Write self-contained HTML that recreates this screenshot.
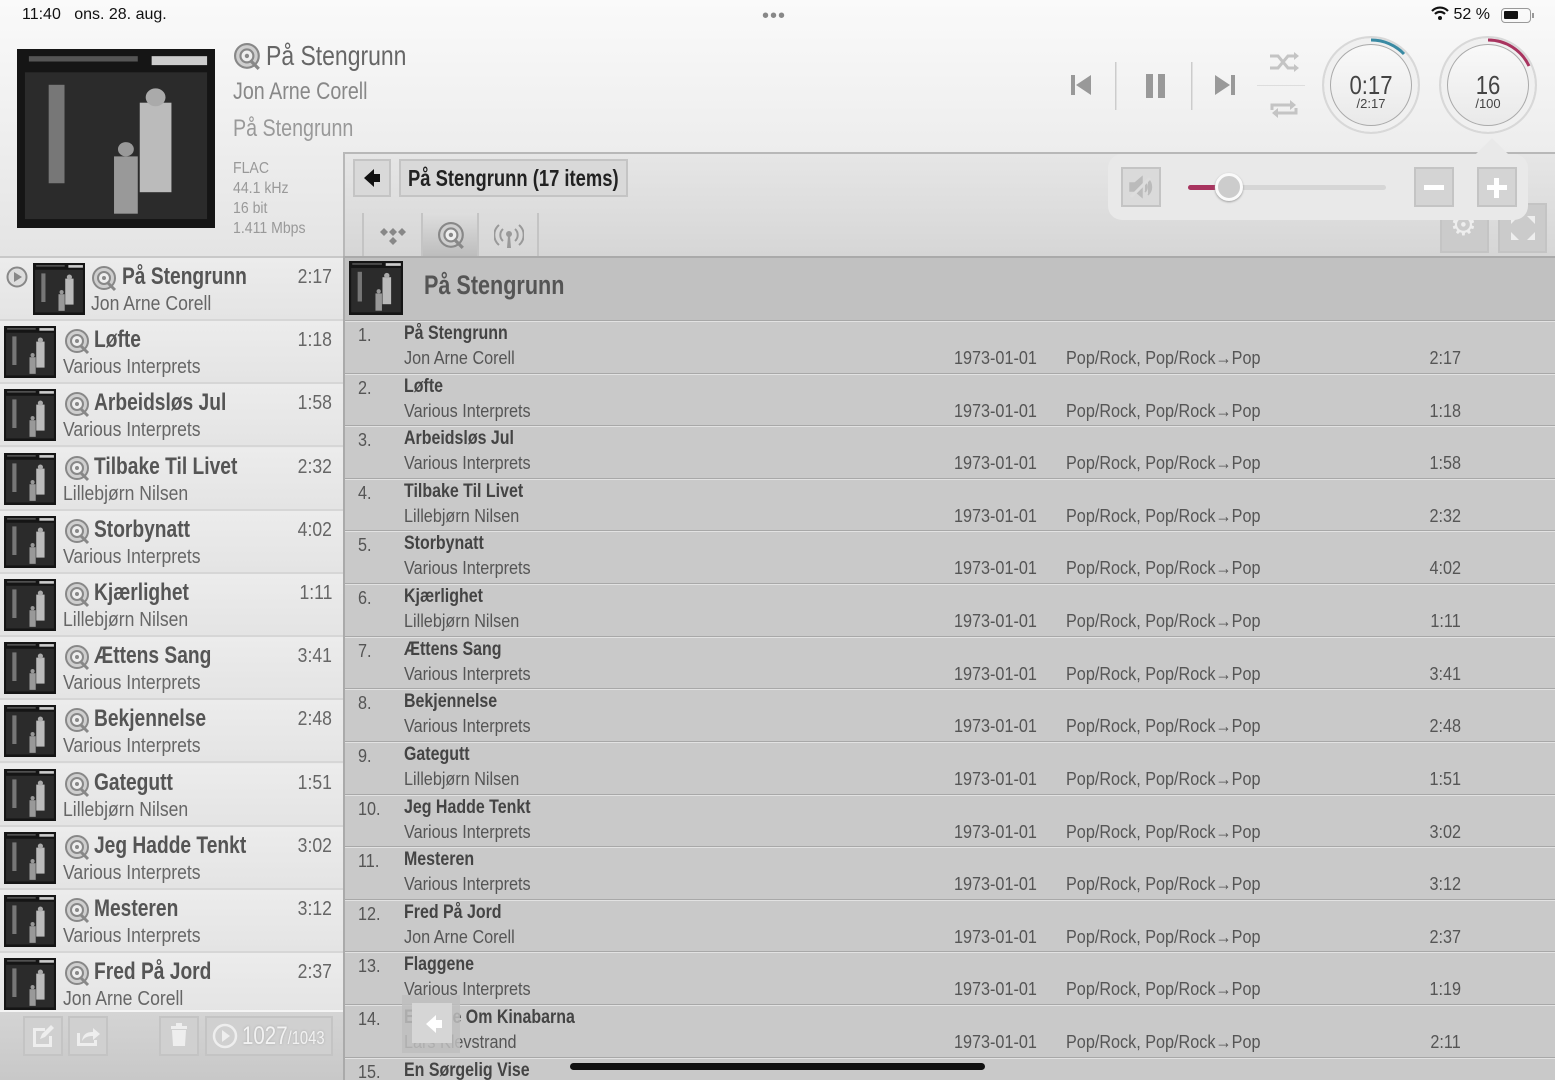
<!DOCTYPE html>
<html><head><meta charset="utf-8">
<style>
*{margin:0;padding:0;box-sizing:border-box}
body{width:1555px;height:1080px;overflow:hidden;position:relative;font-family:"Liberation Sans Narrow","Liberation Sans",sans-serif;color:#555;background:#e6e6e6}
.a{position:absolute}
.sx{transform-origin:0 0;white-space:nowrap}
.hdr{left:0;top:0;width:1555px;height:256px;background:linear-gradient(#fafafa,#e4e4e4)}
.sb{font-family:"Liberation Sans",sans-serif;font-size:16px;color:#111}
.left{left:0;top:256px;width:343px;height:754px;background:#e9e9e9;border-top:2px solid #c8c8c8;overflow:hidden}
.li{position:absolute;left:0;width:343px;height:63px;border-bottom:2px solid #d6d6d6;background:linear-gradient(#ececec,#e4e4e4)}
.li .th{position:absolute;top:5px;width:52px;height:52px}
.li .t{position:absolute;top:5px;font-size:24px;font-weight:bold;color:#555;white-space:nowrap;transform:scaleX(.8);transform-origin:0 0}
.li .s{position:absolute;top:35px;font-size:20px;color:#666;white-space:nowrap;transform:scaleX(.88);transform-origin:0 0}
.li .d{position:absolute;right:11px;top:8px;font-size:20px;color:#666;transform:scaleX(.88);transform-origin:100% 0}
.li .ic{position:absolute;top:8px;width:26px;height:26px}
.right{left:343px;top:256px;width:1212px;height:824px;background:#c9c9c9;border-top:2px solid #aaa;border-left:2px solid #aaa;overflow:hidden}
.tr{position:absolute;left:0;width:1212px;height:53px;border-top:1px solid #a8a8a8;box-shadow:inset 0 1px 0 #e2e2e2;background:#c9c9c9}
.tr span{position:absolute;white-space:nowrap;transform-origin:0 0;transform:scaleX(.9)}
.n{left:13px;top:4px;font-size:18px;color:#555}
.tr .tt{left:59px;top:2px;font-size:19px;font-weight:bold;color:#444;transform:scaleX(.84)}
.ar{left:59px;top:27px;font-size:18px;color:#555}
.dt{left:609px;top:27px;font-size:18px;color:#555}
.gn{left:721px;top:27px;font-size:18px;color:#555}
.tr .du{right:96px;top:27px;font-size:18px;color:#555;transform-origin:100% 0}
.btn{position:absolute;background:#d9d9d9;border:2px solid #c4c4c4}
</style></head><body>
<svg width="0" height="0" style="position:absolute">
<defs>
<symbol id="art" viewBox="0 0 100 100">
<rect width="100" height="100" fill="#151515"/>
<rect x="4" y="13" width="92" height="82" fill="#2b2b2b"/>
<rect x="16" y="20" width="8" height="55" fill="#777"/>
<rect x="62" y="30" width="16" height="50" fill="#bbb"/>
<circle cx="70" cy="27" r="5" fill="#aaa"/>
<rect x="49" y="60" width="12" height="32" fill="#999"/>
<circle cx="55" cy="56" r="4" fill="#999"/>
<rect x="68" y="4" width="28" height="5" fill="#ccc"/>
<rect x="6" y="4" width="55" height="3" fill="#555"/>
</symbol>
<symbol id="disc" viewBox="0 0 26 26">
<circle cx="12" cy="12" r="11" fill="#cfcfcf" stroke="#888" stroke-width="2"/>
<circle cx="12" cy="12" r="6" fill="#eee" stroke="#888" stroke-width="2"/>
<circle cx="12" cy="12" r="2" fill="#888"/>
<path d="M15 16 L23 24" stroke="#888" stroke-width="3"/>
</symbol>
</defs></svg>

<div class="a hdr"></div>
<div class="a sb" style="left:22px;top:6px">11:40&nbsp;&nbsp;&nbsp;ons. 28. aug.</div>
<div class="a" style="left:762px;top:5px;font-size:20px;color:#888;letter-spacing:1px;font-family:'Liberation Sans',sans-serif">•••</div>
<div class="a sb" style="left:1431px;top:6px">
<svg width="18" height="14" viewBox="0 0 18 14" style="vertical-align:-1px"><path d="M1 5 A11 11 0 0 1 17 5" stroke="#111" stroke-width="2.2" fill="none"/><path d="M4 8 A7 7 0 0 1 14 8" stroke="#111" stroke-width="2.2" fill="none"/><circle cx="9" cy="12" r="2" fill="#111"/></svg> 52 %</div>
<div class="a" style="left:1501px;top:8px;width:30px;height:15px;border:1.5px solid #999;border-radius:4px"><div style="margin:2px;width:14px;height:8px;background:#111;border-radius:1px"></div></div>
<div class="a" style="left:1532px;top:13px;width:2px;height:5px;background:#999"></div>

<svg class="a" style="left:17px;top:49px" width="198" height="179" viewBox="0 0 100 100" preserveAspectRatio="none"><use href="#art"/></svg>
<svg class="a" style="left:234px;top:43px" width="28" height="28"><use href="#disc"/></svg>
<div class="a sx" style="left:266px;top:40px;font-size:28px;color:#666;transform:scaleX(.82)">På Stengrunn</div>
<div class="a sx" style="left:233px;top:78px;font-size:24px;color:#888;transform:scaleX(.82)">Jon Arne Corell</div>
<div class="a sx" style="left:233px;top:115px;font-size:24px;color:#999;transform:scaleX(.82)">På Stengrunn</div>
<div class="a sx" style="left:233px;top:159px;font-size:16px;line-height:20px;color:#999;transform:scaleX(.88)">FLAC<br>44.1 kHz<br>16 bit<br>1.411 Mbps</div>

<!-- transport -->
<svg class="a" style="left:1068px;top:72px" width="26" height="26"><path d="M3 3h4v20H3z M23 3v20L8 13z" fill="#999"/></svg>
<div class="a" style="left:1115px;top:62px;width:2px;height:48px;background:#e0e0e0;border-left:1px solid #ccc"></div>
<svg class="a" style="left:1143px;top:72px" width="26" height="28"><rect x="3" y="2" width="7" height="24" fill="#999"/><rect x="15" y="2" width="7" height="24" fill="#999"/></svg>
<div class="a" style="left:1191px;top:62px;width:2px;height:48px;background:#e0e0e0;border-left:1px solid #ccc"></div>
<svg class="a" style="left:1212px;top:72px" width="26" height="26"><path d="M3 3v20L18 13z M19 3h4v20h-4z" fill="#999"/></svg>
<svg class="a" style="left:1268px;top:50px" width="32" height="24"><path d="M2 6h8l10 12h8 M2 18h8l10-12h8" stroke="#c4c4c4" stroke-width="3" fill="none"/><path d="M26 2l5 4-5 4z M26 14l5 4-5 4z" fill="#c4c4c4"/></svg>
<div class="a" style="left:1257px;top:85px;width:48px;height:1px;background:#ddd"></div>
<svg class="a" style="left:1268px;top:96px" width="32" height="26"><path d="M4 14V9h20 M28 12v5H8" stroke="#c4c4c4" stroke-width="3" fill="none"/><path d="M22 4l6 5-6 5z M10 12l-6 5 6 5z" fill="#c4c4c4"/></svg>

<div class="a" style="left:1322px;top:36px;width:98px;height:98px;border-radius:50%;background:linear-gradient(#fafafa,#e8e8e8);border:2px solid #d8d8d8;box-shadow:inset 0 0 0 6px #f0f0f0, inset 0 0 0 7px #aaa"></div>
<svg class="a" style="left:1322px;top:36px" width="98" height="98"><path d="M49 4 A45 45 0 0 1 82 18" stroke="#3a8aa3" stroke-width="3" fill="none"/></svg>
<div class="a" style="left:1322px;top:70px;width:98px;text-align:center;font-size:26px;color:#444;transform:scaleX(.85)">0:17</div>
<div class="a" style="left:1322px;top:96px;width:98px;text-align:center;font-size:13px;color:#444">/2:17</div>
<div class="a" style="left:1439px;top:36px;width:98px;height:98px;border-radius:50%;background:linear-gradient(#fafafa,#e8e8e8);border:2px solid #d8d8d8;box-shadow:inset 0 0 0 6px #f0f0f0, inset 0 0 0 7px #aaa"></div>
<svg class="a" style="left:1439px;top:36px" width="98" height="98"><path d="M49 4 A45 45 0 0 1 90 30" stroke="#a8345f" stroke-width="3" fill="none"/></svg>
<div class="a" style="left:1439px;top:70px;width:98px;text-align:center;font-size:26px;color:#444;transform:scaleX(.85)">16</div>
<div class="a" style="left:1439px;top:96px;width:98px;text-align:center;font-size:13px;color:#444">/100</div>

<!-- right header panel -->
<div class="a" style="left:343px;top:152px;width:1212px;height:104px;background:linear-gradient(#e6e6e6,#d6d6d6);border-top:2px solid #b8b8b8;border-left:2px solid #b8b8b8"></div>
<div class="btn" style="left:353px;top:159px;width:38px;height:38px"></div>
<svg class="a" style="left:362px;top:167px" width="20" height="22"><path d="M2 11L12 2v5h6v8h-6v5z" fill="#111"/></svg>
<div class="btn" style="left:399px;top:159px;width:229px;height:38px"></div>
<div class="a sx" style="left:408px;top:165px;font-size:23px;font-weight:bold;color:#222;transform:scaleX(.8)">På Stengrunn (17 items)</div>
<div class="a" style="left:362px;top:213px;width:2px;height:43px;background:#c4c4c4"></div>
<div class="a" style="left:421px;top:213px;width:58px;height:43px;background:linear-gradient(#dedede,#bdbdbd);border-left:2px solid #c4c4c4;border-right:2px solid #c4c4c4"></div>
<div class="a" style="left:537px;top:213px;width:2px;height:43px;background:#c4c4c4"></div>
<svg class="a" style="left:378px;top:222px" width="30" height="24"><g fill="#888"><path d="M2 10l4-4 4 4-4 4z M11 10l4-4 4 4-4 4z M20 10l4-4 4 4-4 4z M11 19l4-4 4 4-4 4z"/></g></svg>
<svg class="a" style="left:438px;top:222px" width="28" height="28"><use href="#disc"/></svg>
<svg class="a" style="left:494px;top:222px" width="30" height="28"><g stroke="#999" stroke-width="2" fill="none"><path d="M9 7a8 8 0 0 0 0 12 M21 7a8 8 0 0 1 0 12 M5 3a13 13 0 0 0 0 20 M25 3a13 13 0 0 1 0 20"/></g><circle cx="15" cy="12" r="3" fill="#999"/><path d="M14 14h2l1 12h-4z" fill="#999"/></svg>
<div class="btn" style="left:1440px;top:203px;width:49px;height:50px;background:#cbcbcb"></div>
<div class="btn" style="left:1498px;top:203px;width:49px;height:50px;background:#cbcbcb"></div>
<div class="a" style="left:1450px;top:208px;font-size:30px;color:#eee;font-family:'DejaVu Sans',sans-serif">⚙</div>
<svg class="a" style="left:1509px;top:214px" width="28" height="28"><g fill="#eee"><path d="M2 2h8l-8 8z M26 2v8l-8-8z M2 26v-8l8 8z M26 26h-8l8-8z"/></g></svg>

<!-- volume popup -->
<div class="a" style="left:1108px;top:154px;width:420px;height:66px;background:#e9e9e9;border-radius:14px"></div>
<div class="a" style="left:1475px;top:138px;width:0;height:0;border-left:17px solid transparent;border-right:17px solid transparent;border-bottom:17px solid #e9e9e9"></div>
<div class="btn" style="left:1121px;top:167px;width:40px;height:40px;background:#dadada"></div>
<svg class="a" style="left:1128px;top:175px" width="26" height="24"><path d="M2 8h5l7-6v20l-7-6H2z M17 7a7 7 0 0 1 0 10 M20 4a11 11 0 0 1 0 16" fill="#bbb" stroke="#bbb" stroke-width="1.5"/><path d="M3 22L22 3" stroke="#ddd" stroke-width="3"/></svg>
<div class="a" style="left:1188px;top:185px;width:198px;height:5px;border-radius:3px;background:#d6d6d6"></div>
<div class="a" style="left:1188px;top:185px;width:30px;height:5px;border-radius:3px;background:#a8345f"></div>
<div class="a" style="left:1215px;top:173px;width:28px;height:28px;border-radius:50%;background:#ccc;border:3px solid #fafafa;box-shadow:0 1px 2px #999"></div>
<div class="btn" style="left:1414px;top:167px;width:40px;height:40px;background:#d4d4d4"></div>
<div class="a" style="left:1424px;top:185px;width:20px;height:5px;background:#fff"></div>
<div class="btn" style="left:1477px;top:167px;width:40px;height:40px;background:#d4d4d4"></div>
<div class="a" style="left:1487px;top:185px;width:20px;height:5px;background:#fff"></div>
<div class="a" style="left:1494px;top:178px;width:5px;height:20px;background:#fff"></div>

<!-- left list -->
<div class="a left">
<div class="li" style="top:0"><svg class="a" style="left:6px;top:8px" width="22" height="22"><circle cx="11" cy="11" r="9.5" fill="#ddd" stroke="#888" stroke-width="2"/><path d="M8 6l8 5-8 5z" fill="#888"/></svg><svg class="th" style="left:33px" viewBox="0 0 100 100"><use href="#art"/></svg><svg class="ic" style="left:92px"><use href="#disc"/></svg><span class="t" style="left:122px">På Stengrunn</span><span class="s" style="left:91px">Jon Arne Corell</span><span class="d">2:17</span></div>
<div class="li" style="top:63px"><svg class="th" style="left:4px" viewBox="0 0 100 100"><use href="#art"/></svg><svg class="ic" style="left:65px"><use href="#disc"/></svg><span class="t" style="left:94px">Løfte</span><span class="s" style="left:63px">Various Interprets</span><span class="d">1:18</span></div>
<div class="li" style="top:126px"><svg class="th" style="left:4px" viewBox="0 0 100 100"><use href="#art"/></svg><svg class="ic" style="left:65px"><use href="#disc"/></svg><span class="t" style="left:94px">Arbeidsløs Jul</span><span class="s" style="left:63px">Various Interprets</span><span class="d">1:58</span></div>
<div class="li" style="top:190px"><svg class="th" style="left:4px" viewBox="0 0 100 100"><use href="#art"/></svg><svg class="ic" style="left:65px"><use href="#disc"/></svg><span class="t" style="left:94px">Tilbake Til Livet</span><span class="s" style="left:63px">Lillebjørn Nilsen</span><span class="d">2:32</span></div>
<div class="li" style="top:253px"><svg class="th" style="left:4px" viewBox="0 0 100 100"><use href="#art"/></svg><svg class="ic" style="left:65px"><use href="#disc"/></svg><span class="t" style="left:94px">Storbynatt</span><span class="s" style="left:63px">Various Interprets</span><span class="d">4:02</span></div>
<div class="li" style="top:316px"><svg class="th" style="left:4px" viewBox="0 0 100 100"><use href="#art"/></svg><svg class="ic" style="left:65px"><use href="#disc"/></svg><span class="t" style="left:94px">Kjærlighet</span><span class="s" style="left:63px">Lillebjørn Nilsen</span><span class="d">1:11</span></div>
<div class="li" style="top:379px"><svg class="th" style="left:4px" viewBox="0 0 100 100"><use href="#art"/></svg><svg class="ic" style="left:65px"><use href="#disc"/></svg><span class="t" style="left:94px">Ættens Sang</span><span class="s" style="left:63px">Various Interprets</span><span class="d">3:41</span></div>
<div class="li" style="top:442px"><svg class="th" style="left:4px" viewBox="0 0 100 100"><use href="#art"/></svg><svg class="ic" style="left:65px"><use href="#disc"/></svg><span class="t" style="left:94px">Bekjennelse</span><span class="s" style="left:63px">Various Interprets</span><span class="d">2:48</span></div>
<div class="li" style="top:506px"><svg class="th" style="left:4px" viewBox="0 0 100 100"><use href="#art"/></svg><svg class="ic" style="left:65px"><use href="#disc"/></svg><span class="t" style="left:94px">Gategutt</span><span class="s" style="left:63px">Lillebjørn Nilsen</span><span class="d">1:51</span></div>
<div class="li" style="top:569px"><svg class="th" style="left:4px" viewBox="0 0 100 100"><use href="#art"/></svg><svg class="ic" style="left:65px"><use href="#disc"/></svg><span class="t" style="left:94px">Jeg Hadde Tenkt</span><span class="s" style="left:63px">Various Interprets</span><span class="d">3:02</span></div>
<div class="li" style="top:632px"><svg class="th" style="left:4px" viewBox="0 0 100 100"><use href="#art"/></svg><svg class="ic" style="left:65px"><use href="#disc"/></svg><span class="t" style="left:94px">Mesteren</span><span class="s" style="left:63px">Various Interprets</span><span class="d">3:12</span></div>
<div class="li" style="top:695px"><svg class="th" style="left:4px" viewBox="0 0 100 100"><use href="#art"/></svg><svg class="ic" style="left:65px"><use href="#disc"/></svg><span class="t" style="left:94px">Fred På Jord</span><span class="s" style="left:63px">Jon Arne Corell</span><span class="d">2:37</span></div>
</div>
<!-- bottom toolbar -->
<div class="a" style="left:0;top:1010px;width:343px;height:70px;background:linear-gradient(#d4d4d4,#c8c8c8);border-top:2px solid #f4f4f4"></div>
<div class="btn" style="left:23px;top:1016px;width:40px;height:40px;background:#d0d0d0"></div>
<svg class="a" style="left:31px;top:1024px" width="24" height="24"><path d="M2 4h12v3H5v13h13v-8h3v11H2z" fill="#eee"/><path d="M9 15l2-5 9-9 3 3-9 9z" fill="#eee"/></svg>
<div class="btn" style="left:68px;top:1016px;width:40px;height:40px;background:#d0d0d0"></div>
<svg class="a" style="left:75px;top:1023px" width="26" height="26"><path d="M2 10v13h20v-6h-3v3H5V10z" fill="#eee"/><path d="M7 18c1-7 5-9 11-9V5l7 6-7 6v-4c-5 0-8 1-11 5z" fill="#eee"/></svg>
<div class="btn" style="left:159px;top:1016px;width:40px;height:40px;background:#d0d0d0"></div>
<svg class="a" style="left:169px;top:1023px" width="20" height="24"><rect x="2" y="3" width="16" height="3" fill="#eee"/><rect x="7" y="0" width="6" height="3" fill="#eee"/><path d="M3 7h14l-1 16H4z" fill="#eee"/></svg>
<div class="btn" style="left:205px;top:1016px;width:128px;height:40px;background:#d0d0d0"></div>
<svg class="a" style="left:212px;top:1023px" width="26" height="26"><circle cx="13" cy="13" r="11" stroke="#eee" stroke-width="2.5" fill="none"/><path d="M10 7l8 6-8 6z" fill="#eee"/></svg>
<div class="a sx" style="left:242px;top:1022px;font-size:25px;color:#f2f2f2;text-shadow:0 0 3px #aaa;transform:scaleX(.82)">1027<span style="font-size:18px">/1043</span></div>

<!-- right list -->
<div class="a right">
<div class="a" style="left:0;top:0;width:1212px;height:62px;background:#c1c1c1"></div>
<svg class="a" style="left:4px;top:3px" width="54" height="54" viewBox="0 0 100 100"><use href="#art"/></svg>
<div class="a sx" style="left:79px;top:12px;font-size:27px;font-weight:bold;color:#555;transform:scaleX(.8)">På Stengrunn</div>
<div class="tr" style="top:62px"><span class="n">1.</span><span class="tt">På Stengrunn</span><span class="ar">Jon Arne Corell</span><span class="dt">1973-01-01</span><span class="gn">Pop/Rock, Pop/Rock→Pop</span><span class="du">2:17</span></div>
<div class="tr" style="top:115px"><span class="n">2.</span><span class="tt">Løfte</span><span class="ar">Various Interprets</span><span class="dt">1973-01-01</span><span class="gn">Pop/Rock, Pop/Rock→Pop</span><span class="du">1:18</span></div>
<div class="tr" style="top:167px"><span class="n">3.</span><span class="tt">Arbeidsløs Jul</span><span class="ar">Various Interprets</span><span class="dt">1973-01-01</span><span class="gn">Pop/Rock, Pop/Rock→Pop</span><span class="du">1:58</span></div>
<div class="tr" style="top:220px"><span class="n">4.</span><span class="tt">Tilbake Til Livet</span><span class="ar">Lillebjørn Nilsen</span><span class="dt">1973-01-01</span><span class="gn">Pop/Rock, Pop/Rock→Pop</span><span class="du">2:32</span></div>
<div class="tr" style="top:272px"><span class="n">5.</span><span class="tt">Storbynatt</span><span class="ar">Various Interprets</span><span class="dt">1973-01-01</span><span class="gn">Pop/Rock, Pop/Rock→Pop</span><span class="du">4:02</span></div>
<div class="tr" style="top:325px"><span class="n">6.</span><span class="tt">Kjærlighet</span><span class="ar">Lillebjørn Nilsen</span><span class="dt">1973-01-01</span><span class="gn">Pop/Rock, Pop/Rock→Pop</span><span class="du">1:11</span></div>
<div class="tr" style="top:378px"><span class="n">7.</span><span class="tt">Ættens Sang</span><span class="ar">Various Interprets</span><span class="dt">1973-01-01</span><span class="gn">Pop/Rock, Pop/Rock→Pop</span><span class="du">3:41</span></div>
<div class="tr" style="top:430px"><span class="n">8.</span><span class="tt">Bekjennelse</span><span class="ar">Various Interprets</span><span class="dt">1973-01-01</span><span class="gn">Pop/Rock, Pop/Rock→Pop</span><span class="du">2:48</span></div>
<div class="tr" style="top:483px"><span class="n">9.</span><span class="tt">Gategutt</span><span class="ar">Lillebjørn Nilsen</span><span class="dt">1973-01-01</span><span class="gn">Pop/Rock, Pop/Rock→Pop</span><span class="du">1:51</span></div>
<div class="tr" style="top:536px"><span class="n">10.</span><span class="tt">Jeg Hadde Tenkt</span><span class="ar">Various Interprets</span><span class="dt">1973-01-01</span><span class="gn">Pop/Rock, Pop/Rock→Pop</span><span class="du">3:02</span></div>
<div class="tr" style="top:588px"><span class="n">11.</span><span class="tt">Mesteren</span><span class="ar">Various Interprets</span><span class="dt">1973-01-01</span><span class="gn">Pop/Rock, Pop/Rock→Pop</span><span class="du">3:12</span></div>
<div class="tr" style="top:641px"><span class="n">12.</span><span class="tt">Fred På Jord</span><span class="ar">Jon Arne Corell</span><span class="dt">1973-01-01</span><span class="gn">Pop/Rock, Pop/Rock→Pop</span><span class="du">2:37</span></div>
<div class="tr" style="top:693px"><span class="n">13.</span><span class="tt">Flaggene</span><span class="ar">Various Interprets</span><span class="dt">1973-01-01</span><span class="gn">Pop/Rock, Pop/Rock→Pop</span><span class="du">1:19</span></div>
<div class="tr" style="top:746px"><span class="n">14.</span><span class="tt">En Vise Om Kinabarna</span><span class="ar">Lars Klevstrand</span><span class="dt">1973-01-01</span><span class="gn">Pop/Rock, Pop/Rock→Pop</span><span class="du">2:11</span></div>
<div class="tr" style="top:799px"><span class="n">15.</span><span class="tt">En Sørgelig Vise</span></div>
</div>
<div class="a" style="left:402px;top:995px;width:58px;height:58px;background:rgba(190,190,190,0.85)"></div>
<div class="a" style="left:412px;top:1003px;width:40px;height:40px;background:#d6d6d6"></div>
<svg class="a" style="left:424px;top:1013px" width="20" height="22"><path d="M2 11L12 2v5h6v8h-6v5z" fill="#fff"/></svg>
<div class="a" style="left:570px;top:1063px;width:415px;height:7px;border-radius:4px;background:#111"></div>
</body></html>
